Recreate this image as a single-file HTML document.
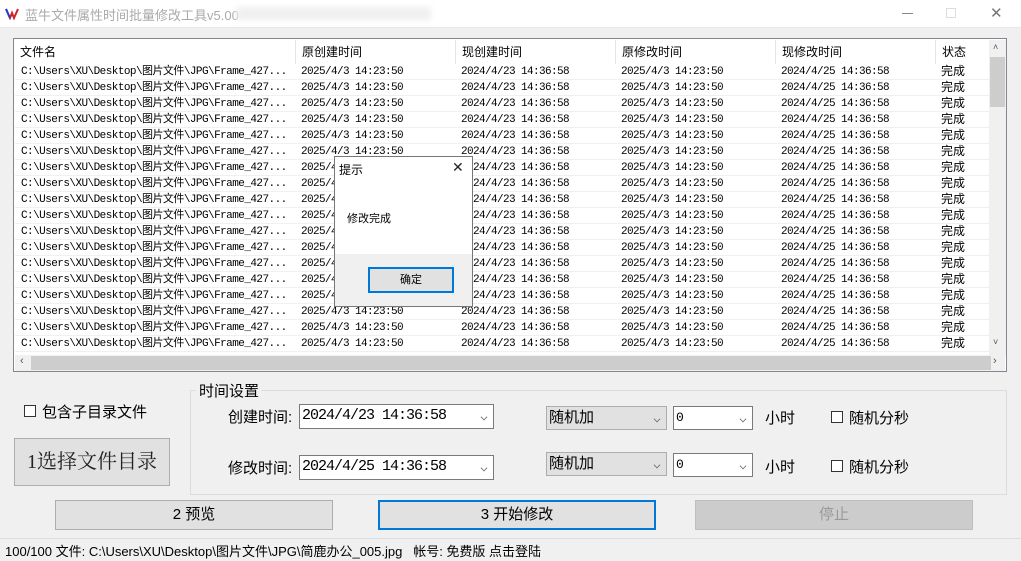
<!DOCTYPE html>
<html><head><meta charset="utf-8"><style>
*{margin:0;padding:0;box-sizing:border-box}
body{width:1021px;height:561px;background:#f0f0f0;font-family:"Liberation Sans","Noto Sans CJK SC",sans-serif;position:relative;overflow:hidden;color:#000}
.a{position:absolute}
.title{left:0;top:0;width:1021px;height:28px;background:#fff;border-bottom:1px solid #e8e8e8}
.list{left:13px;top:38px;width:994px;height:334px;border:1px solid #828790;background:#fff}
.hdr{position:absolute;top:1px;height:24px;font-size:12px;line-height:24px;padding-left:6px;border-right:1px solid #e5e5e5}
.row{position:absolute;left:1px;width:974px;height:16px;border-bottom:1px solid #f0f0f0;font-size:11px;line-height:17px;white-space:nowrap}
.row span{position:absolute;top:0}
.p{left:6px;font-family:"Liberation Mono","Noto Sans CJK SC",monospace;letter-spacing:-0.55px}
.d{font-family:"Liberation Mono",monospace;letter-spacing:-0.6px}
.btn{position:absolute;border:1px solid #adadad;background:#e1e1e1;text-align:center;font-size:15px}
.combo{position:absolute;border:1px solid #7a7a7a;background:#fff;font-size:15px;line-height:22px;padding-left:2px;font-family:"Liberation Mono",monospace;letter-spacing:-1px}
.chev{position:absolute;right:6px;top:9px;width:6px;height:6px;border-right:1px solid #666;border-bottom:1px solid #666;transform:rotate(45deg) scale(0.8)}
.cb{position:absolute;width:12px;height:12px;border:1px solid #333;background:#fff}
</style></head><body>
<div class="a title">
 <svg class="a" style="left:5px;top:8px" width="14" height="12"><path d="M1 1 L5 10 L7 5 L9 10 L13 1" stroke="#d02020" stroke-width="2" fill="none"/><path d="M1 1 L5 10" stroke="#2040d0" stroke-width="2"/></svg>
 <div class="a" style="left:25px;top:5px;font-size:13px;color:#aaa">蓝牛文件属性时间批量修改工具v5.00</div>
 <div class="a" style="left:236px;top:7px;width:195px;height:13px;background:#f0f0f0;filter:blur(3px)"></div>
 <div class="a" style="left:902px;top:13px;width:11px;height:1px;background:#888"></div>
 <div class="a" style="left:946px;top:8px;width:10px;height:10px;border:1px solid #ddd"></div>
 <div class="a" style="left:990px;top:4px;font-size:15px;color:#777">✕</div>
</div>
<div class="a list">
 <div class="hdr" style="left:0;width:282px">文件名</div>
 <div class="hdr" style="left:282px;width:160px">原创建时间</div>
 <div class="hdr" style="left:442px;width:160px">现创建时间</div>
 <div class="hdr" style="left:602px;width:160px">原修改时间</div>
 <div class="hdr" style="left:762px;width:160px">现修改时间</div>
 <div class="hdr" style="left:922px;width:53px;border:0">状态</div>
 <div id="rows"></div>
 <div class="a" style="left:975px;top:1px;width:17px;height:315px;background:#f0f0f0"><div class="a" style="left:1px;top:17px;width:15px;height:50px;background:#cdcdcd"></div><div class="a" style="left:4px;top:2px;font-size:9px;color:#555">˄</div><div class="a" style="left:4px;top:297px;font-size:9px;color:#555">˅</div></div>
 <div class="a" style="left:1px;top:316px;width:990px;height:16px;background:#f0f0f0"><div class="a" style="left:16px;top:1px;height:14px;background:#cdcdcd;width:960px"></div><div class="a" style="left:5px;top:0;font-size:11px;color:#555">‹</div><div class="a" style="left:978px;top:0;font-size:11px;color:#555">›</div></div>
</div>
<script>
var h='';for(var i=0;i<18;i++){h+='<div class="row" style="top:'+(25+i*16)+'px"><span class="p">C:\\Users\\XU\\Desktop\\图片文件\\JPG\\Frame_427...</span><span class="d" style="left:286px">2025/4/3 14:23:50</span><span class="d" style="left:446px">2024/4/23 14:36:58</span><span class="d" style="left:606px">2025/4/3 14:23:50</span><span class="d" style="left:766px">2024/4/25 14:36:58</span><span style="left:926px;font-size:12px;top:-1px">完成</span></div>'}
document.getElementById('rows').innerHTML=h;
</script>
<div class="a" style="left:334px;top:156px;width:139px;height:151px;border:1px solid #777;background:#fff">
 <div class="a" style="left:4px;top:4px;font-size:12px">提示</div>
 <div class="a" style="left:117px;top:2px;font-size:14px;color:#222">✕</div>
 <div class="a" style="left:12px;top:53px;font-size:11px">修改完成</div>
 <div class="a" style="left:0;top:97px;width:137px;height:52px;background:#f0f0f0"></div>
 <div class="a" style="left:33px;top:110px;width:86px;height:26px;border:2px solid #0078d7;background:#e1e1e1;font-size:11px;text-align:center;line-height:22px">确定</div>
</div>
<div class="cb" style="left:24px;top:405px"></div>
<div class="a" style="left:42px;top:401px;font-size:15px">包含子目录文件</div>
<div class="btn" style="left:14px;top:438px;width:156px;height:48px;font-size:20px;line-height:46px;font-family:'Liberation Serif','Noto Serif CJK SC',serif;color:#222">1选择文件目录</div>
<div class="a" style="left:190px;top:390px;width:817px;height:105px;border:1px solid #dcdcdc"></div>
<div class="a" style="left:196px;top:380px;padding:0 3px;background:#f0f0f0;font-size:15px">时间设置</div>
<div class="a" style="left:228px;top:406px;font-size:15px">创建时间:</div>
<div class="combo" style="left:299px;top:404px;width:195px;height:25px">2024/4/23 14:36:58<span class="chev"></span></div>
<div class="a" style="left:228px;top:457px;font-size:15px">修改时间:</div>
<div class="combo" style="left:299px;top:455px;width:195px;height:25px">2024/4/25 14:36:58<span class="chev"></span></div>
<div class="combo" style="left:546px;top:406px;width:121px;height:24px;background:#e1e1e1;border-color:#adadad;font-family:'Liberation Sans','Noto Sans CJK SC',sans-serif;letter-spacing:0">随机加<span class="chev"></span></div>
<div class="combo" style="left:673px;top:406px;width:80px;height:24px;font-size:13px">0<span class="chev"></span></div>
<div class="a" style="left:765px;top:407px;font-size:15px">小时</div>
<div class="cb" style="left:831px;top:411px"></div>
<div class="a" style="left:849px;top:407px;font-size:15px">随机分秒</div>
<div class="combo" style="left:546px;top:452px;width:121px;height:24px;background:#e1e1e1;border-color:#adadad;font-family:'Liberation Sans','Noto Sans CJK SC',sans-serif;letter-spacing:0">随机加<span class="chev"></span></div>
<div class="combo" style="left:673px;top:453px;width:80px;height:24px;font-size:13px">0<span class="chev"></span></div>
<div class="a" style="left:765px;top:456px;font-size:15px">小时</div>
<div class="cb" style="left:831px;top:460px"></div>
<div class="a" style="left:849px;top:456px;font-size:15px">随机分秒</div>
<div class="btn" style="left:55px;top:500px;width:278px;height:30px;line-height:28px">2 预览</div>
<div class="btn" style="left:378px;top:500px;width:278px;height:30px;line-height:26px;border:2px solid #0078d7">3 开始修改</div>
<div class="btn" style="left:695px;top:500px;width:278px;height:30px;line-height:28px;background:#cccccc;border-color:#bfbfbf;color:#999">停止</div>
<div class="a" style="left:0;top:538px;width:1021px;height:1px;background:#ddd"></div>
<div class="a" style="left:5px;top:541px;font-size:13px">100/100 文件: C:\Users\XU\Desktop\图片文件\JPG\简鹿办公_005.jpg&nbsp;&nbsp; 帐号: 免费版 点击登陆</div>
</body></html>
